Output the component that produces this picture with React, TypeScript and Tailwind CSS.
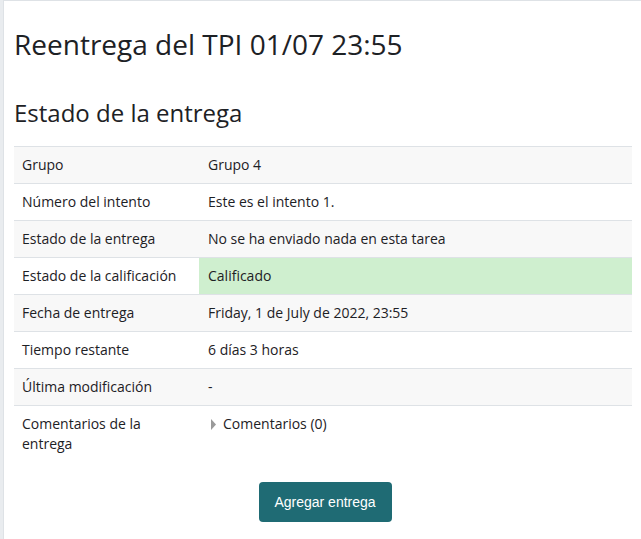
const ROWS: { label: string; value: string; tone?: "graded" }[] = [
  { label: "Grupo", value: "Grupo 4" },
  { label: "Número del intento", value: "Este es el intento 1." },
  { label: "Estado de la entrega", value: "No se ha enviado nada en esta tarea" },
  { label: "Estado de la calificación", value: "Calificado", tone: "graded" },
  { label: "Fecha de entrega", value: "Friday, 1 de July de 2022, 23:55" },
  { label: "Tiempo restante", value: "6 días 3 horas" },
  { label: "Última modificación", value: "-" },
];

export default function App() {
  return (
    <div className="flex min-h-[539px] w-[641px] bg-white text-[#1d2125]" style={{ fontFamily: '"Open Sans", sans-serif' }}>
      <div className="w-[4px] shrink-0 bg-[#e9ecef] border-r border-[#dee2e6]" />
      <div className="flex-1 border-t border-[#dee2e6] pl-[10px] pr-[9px]">
        <h1 className="mt-[26px] text-[28px] leading-[34px] font-normal">Reentrega del TPI 01/07 23:55</h1>
        <h3 className="mt-[37px] text-[24px] leading-[29px] font-normal">Estado de la entrega</h3>

        <table className="mt-[19px] w-full border-collapse text-[14px] leading-[20px]">
          <tbody>
            {ROWS.map((r, i) => (
              <tr key={r.label} className={i % 2 === 0 ? "bg-[#f8f8f8]" : "bg-white"}>
                <td className="w-[185px] border-t border-[#dee2e6] px-[8px] pt-[8px] pb-[8px] align-top">{r.label}</td>
                <td className={"border-t border-[#dee2e6] px-[9px] pt-[8px] pb-[8px] align-top " + (r.tone === "graded" ? "bg-[#cfefcf]" : "")}>{r.value}</td>
              </tr>
            ))}
            <tr className="bg-white">
              <td className="w-[185px] border-t border-[#dee2e6] px-[8px] pt-[8px] pb-[10px] align-top">Comentarios de la entrega</td>
              <td className="border-t border-[#dee2e6] px-[9px] pt-[8px] pb-[10px] align-top">
                <span className="inline-flex items-center gap-[7px]">
                  <svg width="5" height="11" viewBox="0 0 5 11" className="ml-[3px]">
                    <path d="M0 0 L5 5.5 L0 11 Z" fill="#9a9a9a" />
                  </svg>
                  Comentarios (0)
                </span>
              </td>
            </tr>
          </tbody>
        </table>

        <div className="mt-[18px] flex justify-center pl-[4px]">
          <button className="h-[40px] w-[133px] rounded-[4px] bg-[#1f6b74] text-[14px] text-white" style={{ fontFamily: '"Liberation Sans", Arial, sans-serif' }}>
            Agregar entrega
          </button>
        </div>
      </div>
    </div>
  );
}
